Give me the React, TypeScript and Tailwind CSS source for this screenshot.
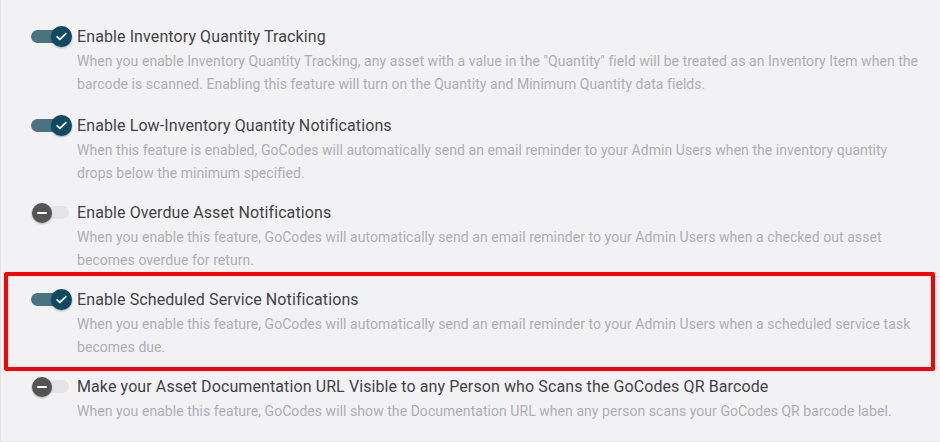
import React from "react";

type Setting = {
  title: string;
  desc: string;
  on: boolean;
  highlight?: boolean;
};

const settings: Setting[] = [
  {
    title: "Enable Inventory Quantity Tracking",
    desc: 'When you enable Inventory Quantity Tracking, any asset with a value in the "Quantity" field will be treated as an Inventory Item when the barcode is scanned. Enabling this feature will turn on the Quantity and Minimum Quantity data fields.',
    on: true,
  },
  {
    title: "Enable Low-Inventory Quantity Notifications",
    desc: "When this feature is enabled, GoCodes will automatically send an email reminder to your Admin Users when the inventory quantity drops below the minimum specified.",
    on: true,
  },
  {
    title: "Enable Overdue Asset Notifications",
    desc: "When you enable this feature, GoCodes will automatically send an email reminder to your Admin Users when a checked out asset becomes overdue for return.",
    on: false,
  },
  {
    title: "Enable Scheduled Service Notifications",
    desc: "When you enable this feature, GoCodes will automatically send an email reminder to your Admin Users when a scheduled service task becomes due.",
    on: true,
    highlight: true,
  },
  {
    title: "Make your Asset Documentation URL Visible to any Person who Scans the GoCodes QR Barcode",
    desc: "When you enable this feature, GoCodes will show the Documentation URL when any person scans your GoCodes QR barcode label.",
    on: false,
  },
];

function Toggle({ on }: { on: boolean }) {
  return (
    <div className="relative w-[42px] h-6 shrink-0">
      <div
        className={`absolute left-0 top-[5px] w-[38px] h-[13px] rounded-full ${
          on ? "bg-[#4b7281]" : "bg-[#e4e4e7]"
        }`}
      />
      {on ? (
        <div className="absolute left-[20px] top-[1px] w-[21px] h-[21px] rounded-full bg-[#0e4a62] flex items-center justify-center shadow-[0_1px_2px_rgba(0,0,0,0.35)]">
          <svg width="13" height="13" viewBox="0 0 24 24" fill="none" stroke="white" strokeWidth="3.2" strokeLinecap="round" strokeLinejoin="round">
            <path d="M4 12.5l5 5L20 6.5" />
          </svg>
        </div>
      ) : (
        <div className="absolute left-[1px] top-[2px] w-[20px] h-[20px] rounded-full bg-[#545454] flex items-center justify-center shadow-[0_1px_2px_rgba(0,0,0,0.3)]">
          <div className="w-[10px] h-[2px] bg-white rounded-sm" />
        </div>
      )}
    </div>
  );
}

function Row({ s, first }: { s: Setting; first?: boolean }) {
  const body = (
    <div className={`flex gap-[4px] ${first ? "mb-[2px]" : ""}`}>
      <Toggle on={s.on} />
      <div className="flex flex-col">
        <div className="text-[16px] leading-6 tracking-[0.1px] text-[#434346]">{s.title}</div>
        <div className="mt-[1px] text-[14px] leading-[23px] tracking-[0.05px] text-[#aeaeb3] pr-[6px]">{s.desc}</div>
      </div>
    </div>
  );
  if (s.highlight) {
    return (
      <div className="-ml-[27px] -mr-[5px] -mt-[16px] -mb-[12px] pl-[23px] pt-[12px] pb-[8px] border-4 border-[#ff0000] rounded-[2px]">
        {body}
      </div>
    );
  }
  return body;
}

export default function App() {
  return (
    <main
      className="w-[940px] h-[442px] overflow-hidden bg-[#f2f2f4] border-l border-b border-[#e3e3e6]"
      style={{ fontFamily: "Roboto, 'Liberation Sans', sans-serif" }}
    >
      <div className="pl-[30px] pr-[10px] pt-[25px] flex flex-col gap-[16px]">
        {settings.map((s, i) => (
          <Row s={s} first={i === 0} key={i} />
        ))}
      </div>
    </main>
  );
}
